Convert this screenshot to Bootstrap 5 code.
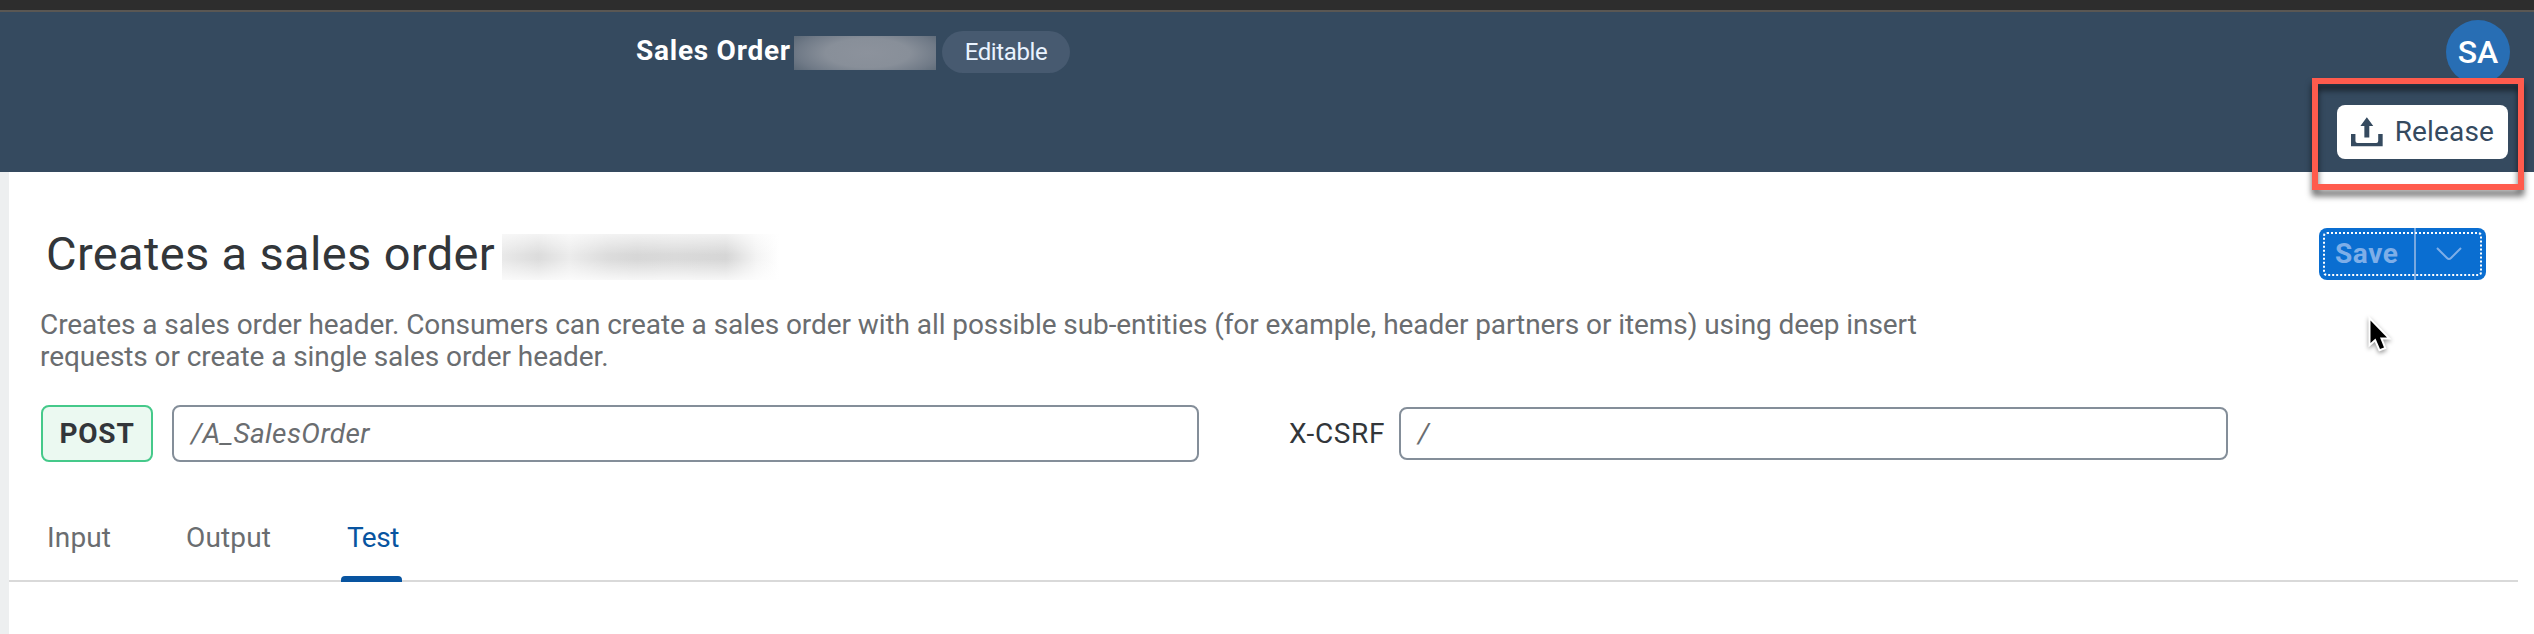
<!DOCTYPE html>
<html lang="en">
<head>
<meta charset="utf-8">
<meta name="viewport" content="width=device-width, initial-scale=1">
<title>Sales Order</title>
<link href="https://cdn.jsdelivr.net/npm/bootstrap@5.3.0/dist/css/bootstrap.min.css" rel="stylesheet">
<style>
body{font-family:Roboto,"Liberation Sans",sans-serif;font-size:28px;line-height:32px;color:#32363a;height:634px;overflow:hidden}
.topline{height:12px;background:#2d2d2d;border-bottom:2px solid #5a5753}
.shell{height:160px;background:#354a5f}
.shell-row{height:72px;padding-top:8px;padding-left:636px;padding-right:24px}
.shell-title{height:64px}
.object-name{letter-spacing:.75px;margin-top:-2px;width:155px}
.redact-a{width:142px;height:34px;margin:2px 6px 0 3px;background:radial-gradient(ellipse 66% 95% at 52% 50%,#8c929c 0,#888f99 45%,#707a87 75%,#566472 100%)}
.pill{width:128px;height:42px;font-size:24px;letter-spacing:-.4px;background:#475a70;color:#e9f3ff}
.avatar{width:64px;height:64px;background:#286eb4;font-size:32px;font-weight:500}
.release{width:171px;height:54px;border-radius:8px;background:#fff;color:#354a5f;margin:21px 26px 0 0;padding:0 14px;gap:12px;letter-spacing:.15px}
.marker{left:2312px;top:78px;width:212px;height:112px;border:6px solid #ff5b4d;filter:drop-shadow(0 6px 3px rgba(0,0,0,.6))}
.page{height:462px;border-left:9px solid #edeff0;background:#fff}
.page-head{padding:56px 48px 0 37px;height:108px}
.page-head h1{width:456px;font-size:47px;line-height:52px;font-weight:400;letter-spacing:.35px;margin:0;white-space:nowrap}
.redact-b{width:280px;height:46px;margin:6px 0 0;background:linear-gradient(#fffa,#fff0 45%,#fff0 55%,#fffc),linear-gradient(90deg,#e9e9e9,#dcdcdc 13%,#ececec 24%,#dcdcdc 38%,#d7d7d7 48%,#dadada 62%,#d6d6d6 80%,#f4f4f4 91%,#fff 99%)}
.save{width:167px;height:52px;background:#0a6ed1;border-radius:8px;color:#7eaee8;font-weight:700;letter-spacing:.6px}
.save::after{content:"";position:absolute;inset:4px;border:2px dotted #fff;border-radius:4px}
.save-label{width:95px;padding-left:16px}
.save-arrow{border-left:2px solid #78a8e0;height:52px}
.desc{margin:0;padding:29px 0 0 31px;height:125px;color:#6a6d70;letter-spacing:-.075px}
.request{padding-left:32px}
.verb{width:112px;height:57px;border:2px solid #45c98a;border-radius:8px;background:#ebf9f1;font-weight:700;letter-spacing:.8px}
.field{height:57px;border:2px solid #848e99;border-radius:8px;padding:0 17px;font-style:italic;letter-spacing:.4px;color:#6a6d70;background:#fff}
.field-path{width:1027px;margin-left:19px}
.field-token{width:829px;height:53px}
.token-label{margin-left:90px;width:110px;letter-spacing:.65px}
.tabs{margin-top:58px;height:62px;width:2509px;padding:2px 0 0 38px;border-bottom:2px solid #d9d9d9;color:#6a6d70;letter-spacing:.15px}
.tab-input{width:139px}
.tab-output{width:161px}
.tab-on{color:#0854a0;letter-spacing:-.5px}
.tab-on::after{content:"";position:absolute;left:-6px;width:61px;top:54px;height:6px;background:#0854a0;border-radius:4px 4px 0 0}
.pointer{left:2366px;top:313px;filter:drop-shadow(0 2px 2px #0006)}
</style>
<script src="https://cdn.jsdelivr.net/npm/bootstrap@5.3.0/dist/js/bootstrap.bundle.min.js"></script>
</head>
<body>
<div class="topline"></div>
<header class="shell">
  <div class="shell-row d-flex justify-content-between align-items-start">
    <div class="shell-title d-flex align-items-center">
      <span class="object-name fw-bold text-white text-nowrap">Sales Order</span>
      <span class="redact-a"></span>
      <span class="pill rounded-pill d-flex align-items-center justify-content-center">Editable</span>
    </div>
    <div class="avatar rounded-circle text-white d-flex align-items-center justify-content-center">SA</div>
  </div>
  <div class="d-flex justify-content-end">
    <button class="release border-0 d-flex align-items-center">
      <svg width="32" height="30" viewBox="0 0 32 30"><path d="M16 0 22.500 9H18.500V20.500H13.500V9H9.500ZM0 17H4.500V24Q4.500 26 6.500 26H25.500Q27.500 26 27.500 24V17H32V29.500H0Z" fill="#354a5f"/></svg>
      <span>Release</span>
    </button>
  </div>
</header>
<main class="page">
  <div class="page-head d-flex align-items-start justify-content-between">
    <div class="d-flex"><h1>Creates a sales order</h1><span class="redact-b"></span></div>
    <div class="save position-relative d-flex align-items-center">
      <span class="save-label">Save</span>
      <span class="save-arrow flex-fill d-flex align-items-center justify-content-center pe-1"><svg width="26" height="14" viewBox="0 0 26 14"><path d="M1 1 11 11Q13 13 15 11L25 1" fill="none" stroke="#7eaee8" stroke-width="2"/></svg></span>
    </div>
  </div>
  <p class="desc">Creates a sales order header. Consumers can create a sales order with all possible sub-entities (for example, header partners or items) using deep insert<br>requests or create a single sales order header.</p>
  <div class="request d-flex align-items-center">
    <div class="verb d-flex align-items-center justify-content-center">POST</div>
    <div class="field field-path d-flex align-items-center">/A_SalesOrder</div>
    <span class="token-label">X-CSRF</span>
    <div class="field field-token d-flex align-items-center">/</div>
  </div>
  <nav class="tabs d-flex">
    <span class="tab-input">Input</span>
    <span class="tab-output">Output</span>
    <span class="tab-on position-relative">Test</span>
  </nav>
</main>
<div class="marker position-absolute"></div>
<svg class="pointer position-absolute" width="32" height="44" viewBox="0 0 32 44"><path d="M4.500 7.500V30L9.500 25.500 14 36 18 34.500 14 24.500H21Z" fill="#000" stroke="#fff" stroke-width="4" paint-order="stroke"/></svg>
</body>
</html>
